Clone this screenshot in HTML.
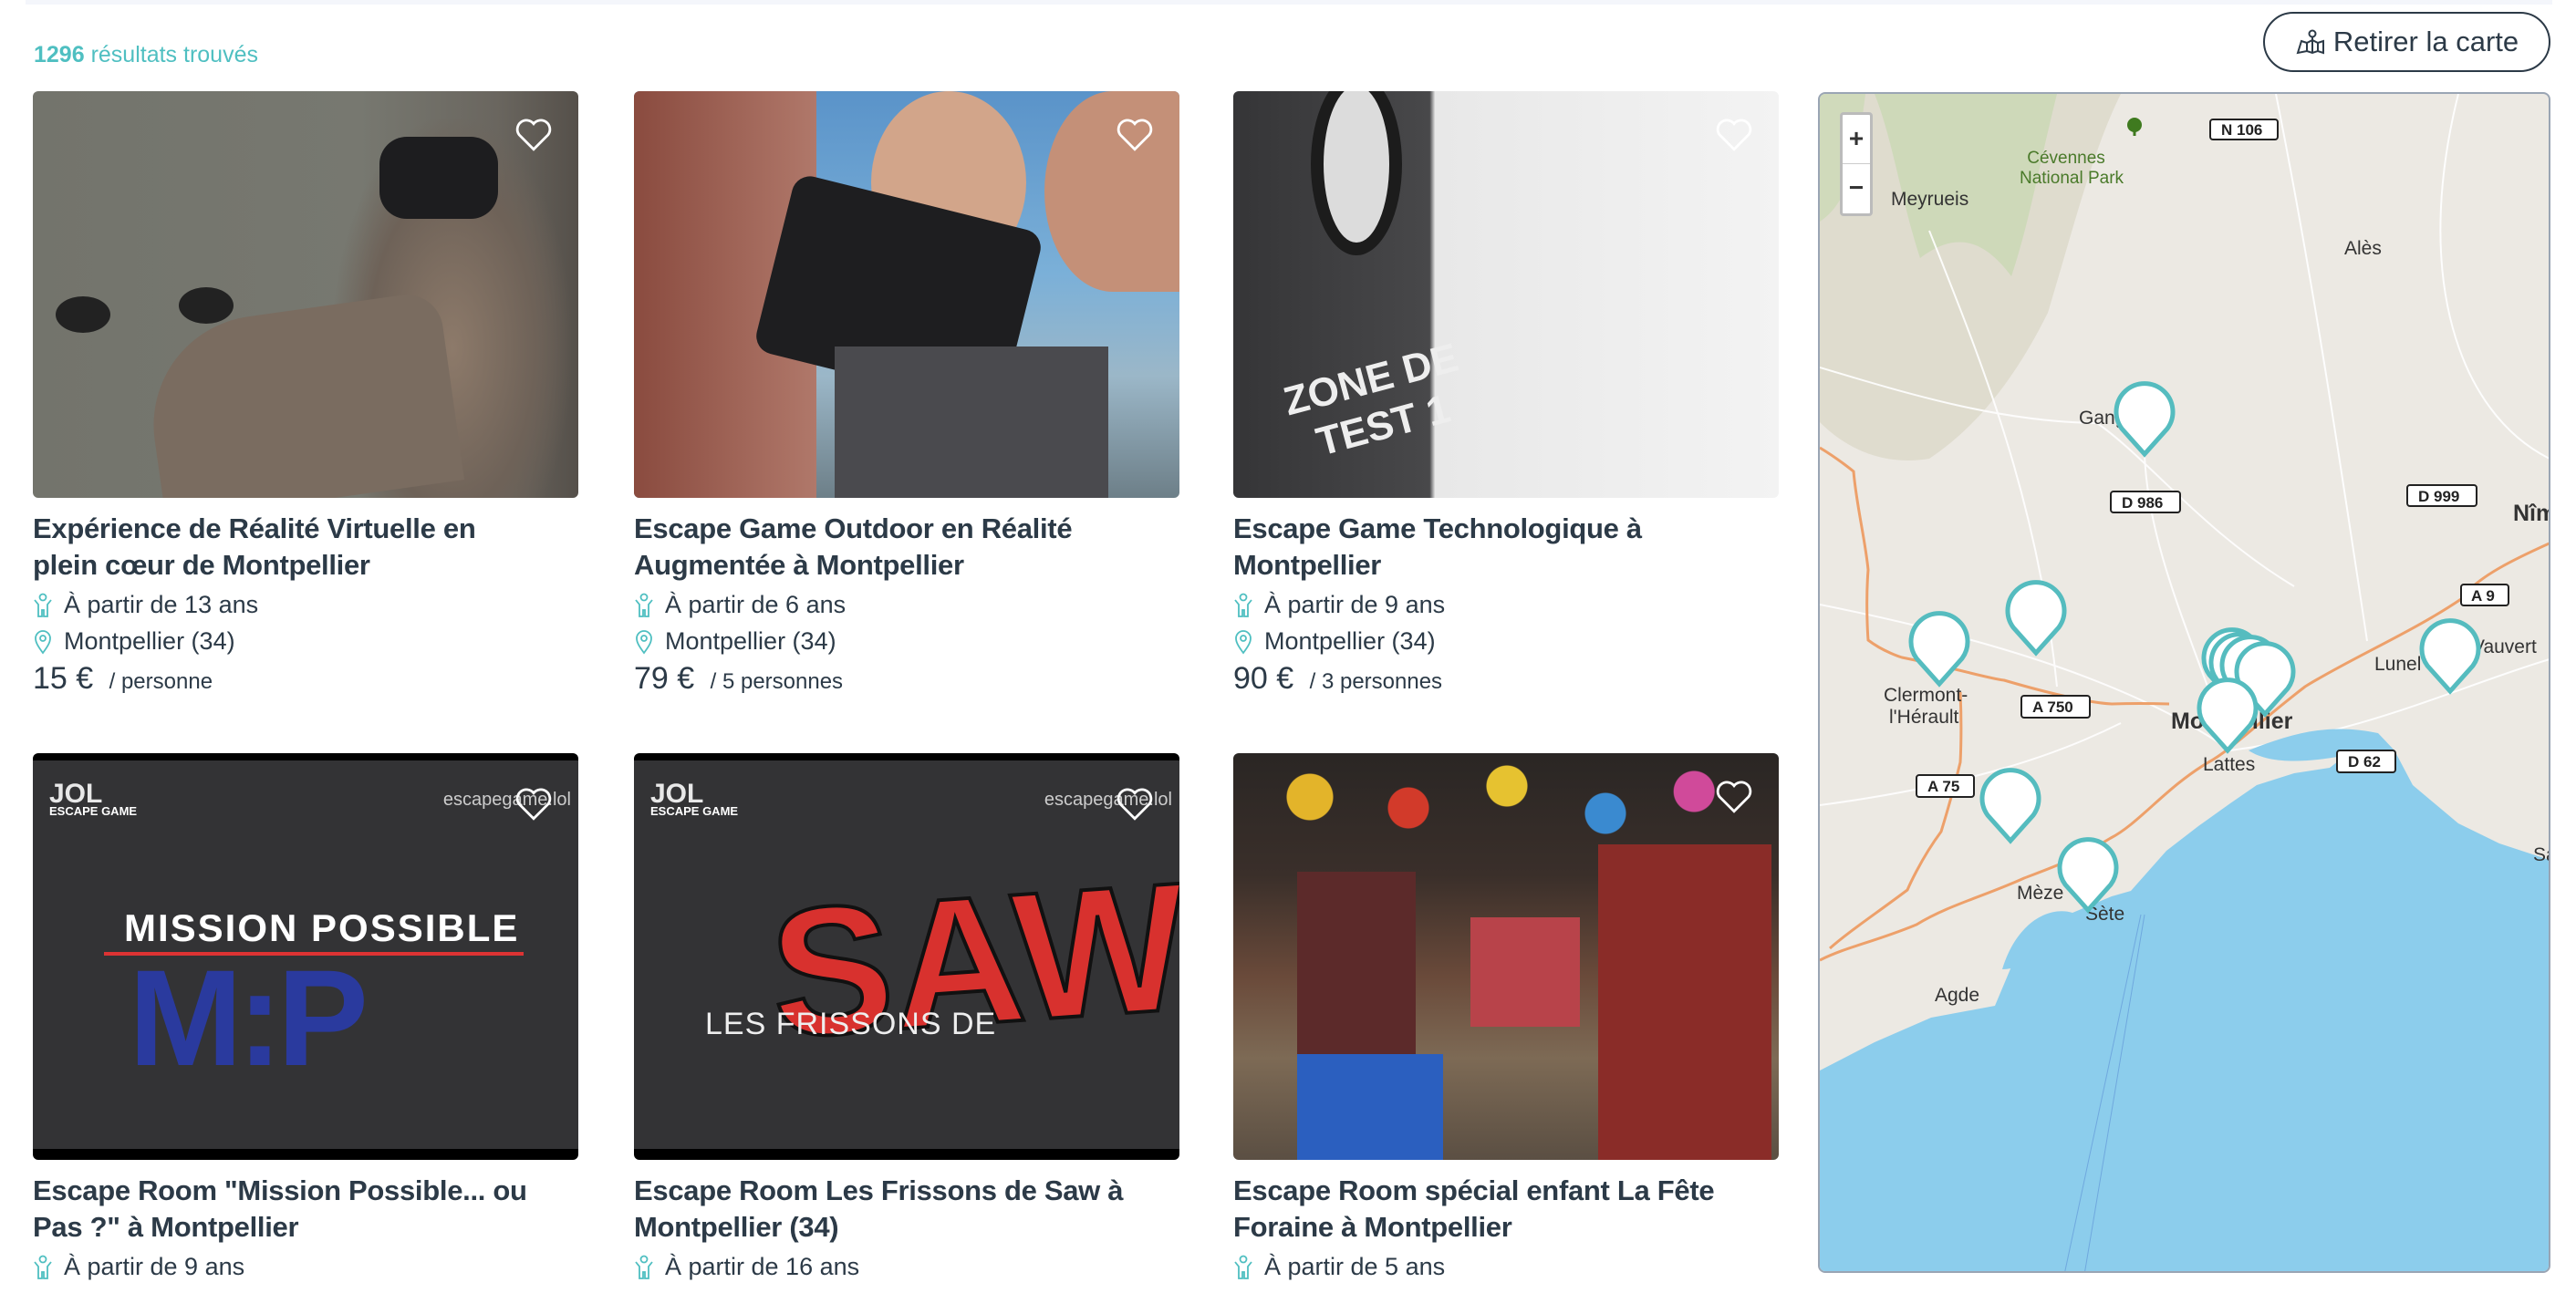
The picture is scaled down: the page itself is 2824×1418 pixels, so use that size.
<!DOCTYPE html>
<html><head><meta charset="utf-8"><style>
*{margin:0;padding:0;box-sizing:border-box}
body{width:2824px;height:1418px;overflow:hidden;background:#fff;font-family:"Liberation Sans",sans-serif;color:#2c3a47;position:relative}
.topbar{position:absolute;left:28px;top:0;width:2770px;height:5px;background:#f4f6fb}
.count{position:absolute;left:37px;top:46px;font-size:25px;color:#4fbfc1}
.count b{font-weight:600}
.btn{position:absolute;left:2481px;top:13px;width:315px;height:66px;border:2px solid #2c3a47;border-radius:33px;font-size:31px;display:flex;align-items:center;justify-content:center;gap:8px;color:#2c3a47}
.card{position:absolute;width:598px}
.img{width:598px;height:446px;border-radius:6px;overflow:hidden;position:relative}
.heart{position:absolute;right:28px;top:28px;width:42px;height:40px}
.title{font-weight:bold;font-size:31px;line-height:40px;margin-top:14px;letter-spacing:-0.3px}
.row{font-size:27px;line-height:39px;display:flex;align-items:center;gap:12px;margin-top:4px}
.row+.row{margin-top:1px}
.row svg{width:22px;height:28px;flex:none}
.price{font-size:34px;line-height:42px}
.price small{font-size:24px;margin-left:8px}
.map{position:absolute;left:1993px;top:101px;width:803px;height:1295px;border:2px solid #9aa5b4;border-radius:8px;overflow:hidden;background:#ece9e3}
</style></head><body>
<div class="topbar"></div>
<div class="count"><b>1296</b> résultats trouvés</div>
<div class="btn"><svg width="34" height="30" viewBox="0 0 34 30" fill="none" stroke="#2c3a47" stroke-width="2"><path d="M3 27 L7 14 L13 16 L19 13 L25 16 L31 14 L31 27 L25 25 L19 27 L13 25 Z M13 16 V25 M19 13 V27 M25 16 V25"/><circle cx="19" cy="6" r="3.5"/><path d="M19 10 V14"/></svg>Retirer la carte</div>

<div class="card" style="left:36px;top:100px">
<div class="img" style="background:linear-gradient(90deg,#73746c 0%,#777870 60%,#6a665f 85%,#55504a 100%)">
<div style="position:absolute;left:330px;top:30px;width:260px;height:420px;background:radial-gradient(ellipse at 50% 60%,#8d7a6a 0%,#6e6258 50%,transparent 72%)"></div>
<div style="position:absolute;left:380px;top:50px;width:130px;height:90px;background:#1d1d1f;border-radius:30px"></div>
<div style="position:absolute;left:130px;top:240px;width:330px;height:210px;background:#7a6c60;border-radius:120px 40px 0 0;transform:rotate(-8deg)"></div>
<div style="position:absolute;left:25px;top:225px;width:60px;height:40px;background:#222;border-radius:50%"></div>
<div style="position:absolute;left:160px;top:215px;width:60px;height:40px;background:#222;border-radius:50%"></div>
<svg class="heart" viewBox="0 0 24 22" fill="none" stroke="#fff" stroke-width="1.6"><path d="M12 20 L3 11 A5 5 0 0 1 12 4 A5 5 0 0 1 21 11 Z"/></svg>
</div>
<div class="title">Expérience de Réalité Virtuelle en<br>plein cœur de Montpellier</div>
<div class="row"><svg viewBox="0 0 22 28" fill="none" stroke="#4fbfc1" stroke-width="1.8"><circle cx="11" cy="5" r="3.5"/><path d="M2 8 L6 13 V26 H10 V19 H12 V26 H16 V13 L20 8"/></svg>À partir de 13 ans</div>
<div class="row"><svg viewBox="0 0 22 28" fill="none" stroke="#4fbfc1" stroke-width="1.8"><path d="M11 26 C5 18 3 14 3 10 A8 8 0 0 1 19 10 C19 14 17 18 11 26 Z"/><circle cx="11" cy="10" r="3"/></svg>Montpellier (34)</div>
<div class="price">15 € <small>/ personne</small></div>
</div>

<div class="card" style="left:695px;top:100px">
<div class="img" style="background:linear-gradient(180deg,#5a93c9 0%,#7bb0d8 45%,#9bb7c8 70%,#6d7f88 100%)">
<div style="position:absolute;left:0;top:0;width:200px;height:446px;background:linear-gradient(90deg,#8a4b3f,#b0786a)"></div>
<div style="position:absolute;left:260px;top:0;width:170px;height:200px;background:#d2a58a;border-radius:50%"></div>
<div style="position:absolute;left:450px;top:0;width:150px;height:220px;background:#c49078;border-radius:50% 0 0 50%"></div>
<div style="position:absolute;left:150px;top:120px;width:280px;height:200px;background:#1e1e20;border-radius:20px;transform:rotate(14deg)"></div>
<div style="position:absolute;left:220px;top:280px;width:300px;height:166px;background:#4a4a4e"></div>
<svg class="heart" viewBox="0 0 24 22" fill="none" stroke="#fff" stroke-width="1.6"><path d="M12 20 L3 11 A5 5 0 0 1 12 4 A5 5 0 0 1 21 11 Z"/></svg>
</div>
<div class="title">Escape Game Outdoor en Réalité<br>Augmentée à Montpellier</div>
<div class="row"><svg viewBox="0 0 22 28" fill="none" stroke="#4fbfc1" stroke-width="1.8"><circle cx="11" cy="5" r="3.5"/><path d="M2 8 L6 13 V26 H10 V19 H12 V26 H16 V13 L20 8"/></svg>À partir de 6 ans</div>
<div class="row"><svg viewBox="0 0 22 28" fill="none" stroke="#4fbfc1" stroke-width="1.8"><path d="M11 26 C5 18 3 14 3 10 A8 8 0 0 1 19 10 C19 14 17 18 11 26 Z"/><circle cx="11" cy="10" r="3"/></svg>Montpellier (34)</div>
<div class="price">79 € <small>/ 5 personnes</small></div>
</div>

<div class="card" style="left:1352px;top:100px">
<div class="img" style="background:linear-gradient(90deg,#353537 0%,#48484a 36%,#e8e8e8 37%,#f3f3f3 100%)">
<div style="position:absolute;left:85px;top:-20px;width:100px;height:200px;border:14px solid #1c1c1c;border-radius:50%;background:#dcdcdc"></div>
<div style="position:absolute;left:60px;top:290px;color:#eee;font-size:44px;font-weight:bold;transform:rotate(-15deg);line-height:52px;text-align:center">ZONE DE<br>TEST 1</div>
<svg class="heart" viewBox="0 0 24 22" fill="none" stroke="#fff" stroke-width="1.6"><path d="M12 20 L3 11 A5 5 0 0 1 12 4 A5 5 0 0 1 21 11 Z"/></svg>
</div>
<div class="title">Escape Game Technologique à<br>Montpellier</div>
<div class="row"><svg viewBox="0 0 22 28" fill="none" stroke="#4fbfc1" stroke-width="1.8"><circle cx="11" cy="5" r="3.5"/><path d="M2 8 L6 13 V26 H10 V19 H12 V26 H16 V13 L20 8"/></svg>À partir de 9 ans</div>
<div class="row"><svg viewBox="0 0 22 28" fill="none" stroke="#4fbfc1" stroke-width="1.8"><path d="M11 26 C5 18 3 14 3 10 A8 8 0 0 1 19 10 C19 14 17 18 11 26 Z"/><circle cx="11" cy="10" r="3"/></svg>Montpellier (34)</div>
<div class="price">90 € <small>/ 3 personnes</small></div>
</div>

<div class="card" style="left:36px;top:826px">
<div class="img" style="background:#333335;border-top:8px solid #000;border-bottom:12px solid #000">
<div style="position:absolute;left:18px;top:30px;color:#fff;font-size:13px;font-weight:bold;line-height:14px"><span style="font-size:30px;color:#e8e8e8">JOL</span><br>ESCAPE GAME</div>
<div style="position:absolute;right:8px;top:32px;color:#ccc;font-size:20px">escapegame.lol</div>
<div style="position:absolute;left:100px;top:160px;color:#fff;font-size:42px;font-weight:bold;letter-spacing:2px">MISSION POSSIBLE</div>
<div style="position:absolute;left:78px;top:210px;width:460px;height:4px;background:#d33"></div>
<div style="position:absolute;left:105px;top:222px;color:#2a3a9e;font-size:150px;font-weight:bold;line-height:120px;letter-spacing:-6px">M:P</div>
<svg class="heart" viewBox="0 0 24 22" fill="none" stroke="#fff" stroke-width="1.6"><path d="M12 20 L3 11 A5 5 0 0 1 12 4 A5 5 0 0 1 21 11 Z"/></svg>
</div>
<div class="title">Escape Room "Mission Possible... ou<br>Pas ?" à Montpellier</div>
<div class="row"><svg viewBox="0 0 22 28" fill="none" stroke="#4fbfc1" stroke-width="1.8"><circle cx="11" cy="5" r="3.5"/><path d="M2 8 L6 13 V26 H10 V19 H12 V26 H16 V13 L20 8"/></svg>À partir de 9 ans</div>
</div>

<div class="card" style="left:695px;top:826px">
<div class="img" style="background:#333335;border-top:8px solid #000;border-bottom:12px solid #000">
<div style="position:absolute;left:18px;top:30px;color:#fff;font-size:13px;font-weight:bold;line-height:14px"><span style="font-size:30px;color:#e8e8e8">JOL</span><br>ESCAPE GAME</div>
<div style="position:absolute;right:8px;top:32px;color:#ccc;font-size:20px">escapegame.lol</div>
<div style="position:absolute;left:150px;top:110px;color:#d8312e;font-size:200px;font-weight:bold;line-height:220px;-webkit-text-stroke:4px #111;transform:rotate(-4deg)">SAW</div>
<div style="position:absolute;left:78px;top:270px;color:#eee;font-size:34px;letter-spacing:1px">LES FRISSONS DE</div>
<svg class="heart" viewBox="0 0 24 22" fill="none" stroke="#fff" stroke-width="1.6"><path d="M12 20 L3 11 A5 5 0 0 1 12 4 A5 5 0 0 1 21 11 Z"/></svg>
</div>
<div class="title">Escape Room Les Frissons de Saw à<br>Montpellier (34)</div>
<div class="row"><svg viewBox="0 0 22 28" fill="none" stroke="#4fbfc1" stroke-width="1.8"><circle cx="11" cy="5" r="3.5"/><path d="M2 8 L6 13 V26 H10 V19 H12 V26 H16 V13 L20 8"/></svg>À partir de 16 ans</div>
</div>

<div class="card" style="left:1352px;top:826px">
<div class="img" style="background:linear-gradient(180deg,#2a2624 0%,#3a2f2a 30%,#6a4a3a 55%,#7d6a55 75%,#5b4f43 100%)">
<div style="position:absolute;left:30px;top:0;width:540px;height:120px;background:radial-gradient(circle at 10% 40%,#e3b42a 0 25px,transparent 26px),radial-gradient(circle at 30% 50%,#d23a2a 0 22px,transparent 23px),radial-gradient(circle at 50% 30%,#e6c230 0 22px,transparent 23px),radial-gradient(circle at 70% 55%,#3a8ad0 0 22px,transparent 23px),radial-gradient(circle at 88% 35%,#d04a9a 0 22px,transparent 23px)"></div>
<div style="position:absolute;left:70px;top:130px;width:130px;height:320px;background:#5c2a2a"></div>
<div style="position:absolute;left:70px;top:330px;width:160px;height:116px;background:#2b5fbf"></div>
<div style="position:absolute;left:400px;top:100px;width:190px;height:346px;background:#8a2c28"></div>
<div style="position:absolute;left:260px;top:180px;width:120px;height:120px;background:#b8434a"></div>
<svg class="heart" viewBox="0 0 24 22" fill="none" stroke="#fff" stroke-width="1.6"><path d="M12 20 L3 11 A5 5 0 0 1 12 4 A5 5 0 0 1 21 11 Z"/></svg>
</div>
<div class="title">Escape Room spécial enfant La Fête<br>Foraine à Montpellier</div>
<div class="row"><svg viewBox="0 0 22 28" fill="none" stroke="#4fbfc1" stroke-width="1.8"><circle cx="11" cy="5" r="3.5"/><path d="M2 8 L6 13 V26 H10 V19 H12 V26 H16 V13 L20 8"/></svg>À partir de 5 ans</div>
</div>

<div class="map">
<svg width="803" height="1295" viewBox="0 0 803 1295" style="position:absolute;left:0;top:0">
<defs><g id="pin"><path d="M0 0 L-25 -28 A31 31 0 1 1 25 -28 Z" fill="#fff" stroke="#55bcbf" stroke-width="5"/></g></defs>
<path d="M0 0 H330 C300 60 280 140 250 240 C220 300 180 360 120 400 C60 410 20 380 0 360 Z" fill="#dcd8c8" opacity="0.8"/>
<path d="M60 0 H260 C240 80 230 140 210 200 C180 160 150 150 110 180 C90 120 80 50 60 0Z" fill="#c9d8b4" opacity="0.8"/>
<path d="M0 0 H50 C40 80 30 120 0 140Z" fill="#c9d8b4" opacity="0.7"/>
<g fill="none" stroke="#fff" stroke-width="2" opacity="0.9">
<path d="M0 300 C100 330 200 360 304 361 C360 400 420 480 520 540"/><path d="M356 395 C360 500 410 600 450 720"/><path d="M120 150 C180 300 240 450 260 650"/><path d="M500 0 C540 200 570 400 600 600"/><path d="M0 560 C200 600 350 650 450 720"/><path d="M700 0 C650 200 700 350 800 400"/><path d="M450 720 C600 700 700 650 800 620"/><path d="M0 780 C150 760 250 730 330 690"/>
</g>
<g fill="none" stroke="#eda06a" stroke-width="3">
<path d="M820 484 C760 510 720 530 703 554 C650 590 580 620 532 650 C480 690 450 720 426 733 C380 760 350 800 319 816 C280 840 250 850 224 860 C180 880 140 890 106 911 C60 930 30 935 0 950"/>
<path d="M0 388 C20 400 37 414 37 414 C40 450 50 490 53 522 C50 560 53 599 53 599 C70 612 90 618 90 618 C150 630 180 640 202 643 C260 660 300 668 320 669 C350 668 383 669 383 669"/>
<path d="M154 656 C156 700 154 733 154 733 C145 770 133 809 133 809 C110 840 96 873 96 873 C60 900 30 920 11 937"/>
</g>
<path d="M0 1071 L60 1040 L122 1013 L192 1000 L213 950 L250 915 L277 898 L320 880 L341 874 L380 830 L415 803 L450 778 L479 758 L520 745 L559 739 L590 715 L612 701 L630 720 L650 758 L700 800 L745 822 L803 841 L803 1295 L0 1295 Z" fill="#8ccdec"/>
<path d="M200 960 C215 910 250 890 277 898 C260 930 230 960 200 960Z" fill="#8ccdec"/>
<path d="M470 720 C520 700 560 690 612 701 L600 720 C560 730 500 740 470 720Z" fill="#8ccdec"/>
<line x1="352" y1="900" x2="268" y2="1295" stroke="#6fa8de" stroke-width="1"/>
<line x1="356" y1="900" x2="290" y2="1295" stroke="#6fa8de" stroke-width="1"/>
<g font-family="Liberation Sans, sans-serif" font-size="21" fill="#333">
<text x="270" y="76" fill="#4a7a2a" font-size="19" text-anchor="middle">Cévennes</text><text x="276" y="98" fill="#4a7a2a" font-size="19" text-anchor="middle">National Park</text>
<text x="78" y="122">Meyrueis</text><text x="575" y="176">Alès</text>
<text x="70" y="666">Clermont-</text><text x="76" y="690">l'Hérault</text>
<text x="385" y="696" font-weight="bold" font-size="25">Montpellier</text>
<text x="420" y="742">Lattes</text><text x="216" y="883">Mèze</text><text x="291" y="906">Sète</text>
<text x="126" y="995">Agde</text><text x="608" y="632">Lunel</text><text x="715" y="613">Vauvert</text>
<text x="760" y="468" font-weight="bold" font-size="25">Nîmes</text><text x="284" y="362">Ganges</text><text x="782" y="841">Sai</text>
</g>
<g font-family="Liberation Sans, sans-serif" font-size="17" font-weight="bold" fill="#222">
<rect x="428" y="28" width="74" height="22" rx="3" fill="#fff" stroke="#222" stroke-width="2"/><text x="440" y="45">N 106</text>
<rect x="319" y="436" width="76" height="23" rx="3" fill="#fff" stroke="#222" stroke-width="2"/><text x="331" y="454">D 986</text>
<rect x="644" y="429" width="76" height="23" rx="3" fill="#fff" stroke="#222" stroke-width="2"/><text x="656" y="447">D 999</text>
<rect x="703" y="538" width="52" height="23" rx="3" fill="#fff" stroke="#222" stroke-width="2"/><text x="714" y="556">A 9</text>
<rect x="221" y="660" width="75" height="24" rx="3" fill="#fff" stroke="#222" stroke-width="2"/><text x="233" y="678">A 750</text>
<rect x="106" y="747" width="63" height="24" rx="3" fill="#fff" stroke="#222" stroke-width="2"/><text x="118" y="765">A 75</text>
<rect x="567" y="720" width="64" height="24" rx="3" fill="#fff" stroke="#222" stroke-width="2"/><text x="579" y="738">D 62</text>
</g>
<use href="#pin" x="356" y="395"/><use href="#pin" x="131" y="647"/><use href="#pin" x="237" y="613"/>
<use href="#pin" x="209" y="819"/><use href="#pin" x="294" y="895"/>
<use href="#pin" x="452" y="665"/><use href="#pin" x="460" y="670"/><use href="#pin" x="472" y="673"/><use href="#pin" x="488" y="680"/>
<use href="#pin" x="447" y="720"/><use href="#pin" x="691" y="655"/>
<circle cx="345" cy="34" r="8" fill="#3f7a1f"/><path d="M345 38 V46" stroke="#3f7a1f" stroke-width="3"/>
</svg>
<div style="position:absolute;left:22px;top:20px;width:36px;height:114px;background:#fff;border:3px solid #bbb;border-radius:4px;font-size:28px;font-weight:bold;text-align:center;color:#333">
<div style="height:54px;line-height:52px;border-bottom:1px solid #ccc">+</div><div style="line-height:52px">−</div></div>
</div>
</body></html>
